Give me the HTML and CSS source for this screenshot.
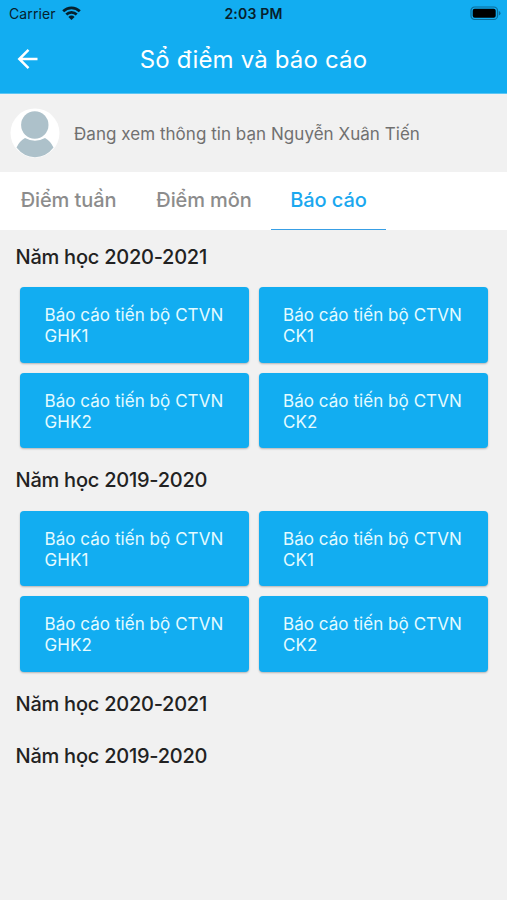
FILE: index.html
```html
<!DOCTYPE html>
<html lang="vi">
<head>
<meta charset="utf-8">
<title>Sổ điểm và báo cáo</title>
<link rel="stylesheet" href="styles.css">
</head>
<body>
<header class="header">
  <div class="status">
    <div class="carrier"><span>Carrier</span>
      <svg class="wifi" width="19" height="15" viewBox="0 0 19 15"><g fill="none" stroke="#06212d" stroke-width="2.7"><path d="M1.200 5.200a11.800 11.800 0 0 1 16.600 0"/><path d="M4.300 8.500a7.400 7.400 0 0 1 10.400 0"/></g><path d="M6.400 10.900a4.400 4.400 0 0 1 6.200 0L9.500 14z" fill="#06212d"/></svg>
    </div>
    <span class="time">2:03 PM</span>
    <svg class="battery" width="31" height="15" viewBox="0 0 31 15"><rect x="1" y="1" width="26.500" height="12.500" rx="3.600" fill="none" stroke="#0b6d99" stroke-width="1.200"/><rect x="2.700" y="2.700" width="23" height="9.100" rx="2" fill="#000"/><path d="M28.800 5v4.500q1.700-.6 1.700-2.250T28.800 5z" fill="#0b6d99"/></svg>
  </div>
  <div class="navbar">
    <svg class="back" width="22" height="22" viewBox="0 0 22 22" fill="none" stroke="#fff" stroke-width="2.500"><path d="M20.500 11H2.800M11.500 1.800 2.300 11l9.200 9.200"/></svg>
    <h1 class="title">Sổ điểm và báo cáo</h1>
  </div>
</header>
<section class="profile">
  <svg class="avatar" width="50" height="50" viewBox="0 0 50 50"><circle cx="25" cy="25" r="24.500" fill="#fff"/><circle cx="24.800" cy="17" r="13.700" fill="#adc1ca"/><path d="M15 30q10 5.500 20 0 5.500 3 8.500 9.500Q36 49.200 25 49.200T6.500 39.500Q9.500 33 15 30z" fill="#adc1ca"/></svg>
  <p class="viewing">Đang xem thông tin bạn Nguyễn Xuân Tiến</p>
</section>
<nav class="tabs">
  <a class="tab tab-week">Điểm tuần</a>
  <a class="tab tab-subject">Điểm môn</a>
  <a class="tab tab-report active">Báo cáo</a>
</nav>
<main>
  <h2 class="year"><span>Năm học 2020-2021</span></h2>
  <div class="reports">
    <a class="report"><span>Báo cáo tiến bộ CTVN<br>GHK1</span></a>
    <a class="report"><span>Báo cáo tiến bộ CTVN<br>CK1</span></a>
    <a class="report"><span>Báo cáo tiến bộ CTVN<br>GHK2</span></a>
    <a class="report"><span>Báo cáo tiến bộ CTVN<br>CK2</span></a>
  </div>
  <h2 class="year"><span>Năm học 2019-2020</span></h2>
  <div class="reports">
    <a class="report"><span>Báo cáo tiến bộ CTVN<br>GHK1</span></a>
    <a class="report"><span>Báo cáo tiến bộ CTVN<br>CK1</span></a>
    <a class="report"><span>Báo cáo tiến bộ CTVN<br>GHK2</span></a>
    <a class="report"><span>Báo cáo tiến bộ CTVN<br>CK2</span></a>
  </div>
  <h2 class="year"><span>Năm học 2020-2021</span></h2>
  <h2 class="year"><span>Năm học 2019-2020</span></h2>
</main>
</body>
</html>
```

FILE: styles.css
```css
* { box-sizing: border-box; }
body {
  margin: 0;
  height: 900px;
  overflow: hidden;
  background: #f1f1f1;
  font-family: Inter, "Liberation Sans", sans-serif;
  color: #222;
}
h1, h2, p { margin: 0; font-weight: 400; }
svg { display: block; flex: none; }
.header {
  height: 94px;
  background: #12adf1;
  border-bottom: 1px solid #5cc6f4;
}
.status {
  display: grid;
  grid-template-columns: 1fr auto 1fr;
  align-items: center;
  height: 27px;
  padding: 0 6px 0 9px;
  color: #06212d;
}
.carrier { display: flex; align-items: center; gap: 6px; font-size: 14px; letter-spacing: 0.1px; }
.wifi { margin-top: -1px; }
.time { margin-right: 3px; font-size: 14px; font-weight: 600; letter-spacing: 0.2px; }
.battery { justify-self: end; }
.navbar {
  display: grid;
  grid-template-columns: 60px 1fr 60px;
  align-items: center;
  height: 65px;
}
.back { margin: -1px 0 0 17px; }
.title { text-align: center; font-size: 24px; letter-spacing: 0.16px; color: #fff; white-space: nowrap; }
.profile {
  display: flex;
  align-items: center;
  gap: 14px;
  height: 78px;
  padding-left: 10px;
}
.viewing { padding-top: 1px; font-size: 17px; letter-spacing: 0.04px; color: #707070; white-space: nowrap; }
.tabs { display: flex; height: 58px; background: #fff; }
.tab {
  display: flex;
  align-items: center;
  justify-content: center;
  padding-bottom: 1px;
  border-bottom: 1px solid transparent;
  font-size: 20px;
  font-weight: 500;
  letter-spacing: -0.1px;
  color: #8c8c8c;
  white-space: nowrap;
}
.tab-week { width: 137px; }
.tab-subject { width: 134px; }
.tab-report { width: 115px; }
.tab.active { color: #1ba8ef; border-bottom: 1.5px solid #389fe5; }
.year {
  display: flex;
  align-items: center;
  height: 52.5px;
  padding: 1px 0 0 15.5px;
  font-size: 20px;
  font-weight: 500;
  letter-spacing: -0.24px;
}
.reports {
  display: grid;
  grid-template-columns: 229px 229px;
  grid-auto-rows: 75.5px;
  gap: 10px 9.5px;
  height: 171px;
  padding: 4.7px 0 0 20px;
}
.report {
  padding: 18.2px 24.5px 0;
  border-radius: 4px;
  background: #12adf1;
  box-shadow: 0 1px 2px rgba(0, 0, 0, 0.25);
  font-size: 17px;
  line-height: 21px;
  letter-spacing: 0.05px;
  color: #e4fbff;
  white-space: nowrap;
}
```
